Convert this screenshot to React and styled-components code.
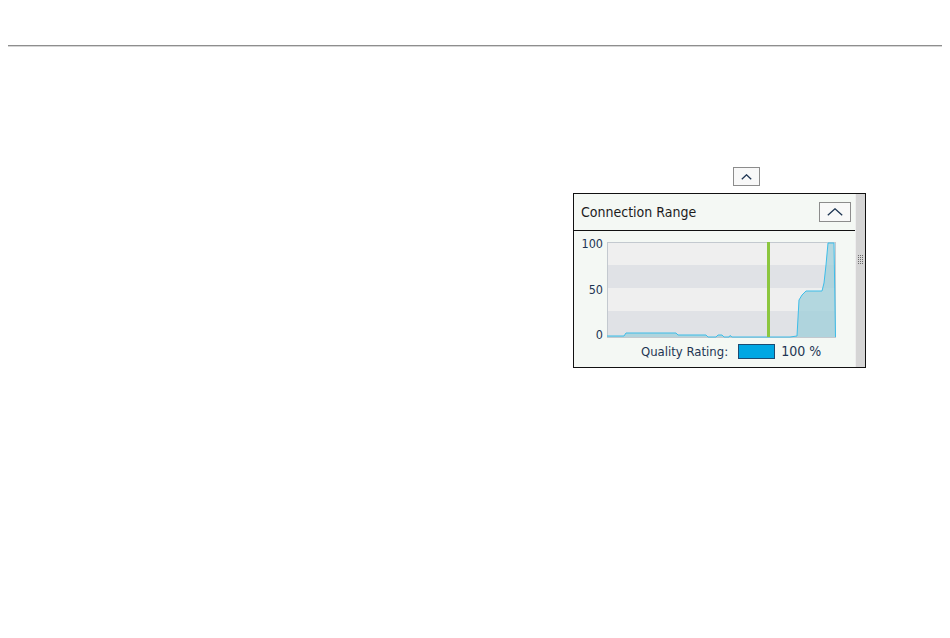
import React from "react";
import styled, { createGlobalStyle } from "styled-components";

const Global = createGlobalStyle`
  * { box-sizing: border-box; }
  html, body { background: #ffffff; }
  body {
    margin: 8px;
    font-family: "DejaVu Sans Condensed", "DejaVu Sans", sans-serif;
    color: #1a1a1a;
  }
`;

const Page = styled.div`
  display: flex;
  flex-direction: column;
`;

const Rule = styled.div`
  margin-top: 37px;
  height: 2px;
  border-top: 1px solid #8e8e8e;
  border-bottom: 1px solid #d6d6d6;
`;

const Stage = styled.div`
  display: flex;
  flex-direction: column;
  align-items: flex-start;
  padding-top: 120px;
  padding-left: 565px;
  gap: 7px;
`;

const Toolbar = styled.div`
  display: flex;
  padding-left: 160px;
`;

const ChevronButton = styled.button`
  display: flex;
  align-items: center;
  justify-content: center;
  padding: 0;
  width: ${(p) => p.$w}px;
  height: ${(p) => p.$h}px;
  border: 1px solid #8c8c8c;
  background: #f8f8f8;
  cursor: pointer;
`;

const Panel = styled.div`
  display: flex;
  width: 293px;
  height: 175px;
  border: 1px solid #111;
  background: #f4f8f4;
`;

const Main = styled.div`
  flex: 1;
  display: flex;
  flex-direction: column;
  min-width: 0;
`;

const Header = styled.div`
  display: flex;
  align-items: center;
  justify-content: space-between;
  height: 37px;
  padding: 0 4px 0 7px;
  border-bottom: 1px solid #111;
`;

const Title = styled.span`
  font-size: 14px;
  color: #1c1c1c;
`;

const ChartBody = styled.div`
  display: flex;
  flex-direction: column;
  padding-top: 4px;
`;

const QualityRow = styled.div`
  display: flex;
  align-items: center;
  height: 18px;
  padding-left: 67px;
  gap: 10px;
  color: #1e3553;
`;

const QualityLabel = styled.span`
  font-size: 13px;
`;

const QualityBar = styled.div`
  width: 37px;
  height: 15px;
  background: #00a7e3;
  border: 1px solid #1d4b72;
`;

const QualityValue = styled.span`
  font-size: 14px;
  margin-left: -4px;
`;

const Scrollbar = styled.div`
  position: relative;
  width: 10px;
  background: #d5d5d5;
  border-left: 1px solid #eeeeee;
`;

const Grip = styled.svg`
  position: absolute;
  left: 2px;
  top: 61px;
`;

const Chevron = ({ w, h }) => (
  <svg width={w} height={h} viewBox={`0 0 ${w} ${h}`}>
    <polyline
      points={`0.8,${h - 0.8} ${w / 2},0.8 ${w - 0.8},${h - 0.8}`}
      fill="none"
      stroke="#1e3553"
      strokeWidth="1.3"
    />
  </svg>
);

const OX = 574;
const OY = 235;
const raw = [
  [607, 336], [624, 336], [626, 333], [676, 333], [678, 335], [706, 335],
  [708, 337], [716, 337], [718, 335], [722, 335], [724, 337], [729, 337],
  [730, 335.5], [732, 337], [790, 337], [797, 336], [799, 300], [802, 295],
  [806, 291], [822, 291], [824, 283], [826, 265], [828, 243], [834, 243],
  [835.5, 337],
];
const pts = raw.map(([x, y]) => [x - OX, y - OY]);
const linePts = pts.map((p) => p.join(",")).join(" ");
const areaPts = `${33},${102} ` + linePts + ` ${262},${102}`;

const Chart = () => (
  <svg width="281" height="107" viewBox="0 0 281 107">
    <g fontFamily='"DejaVu Sans Condensed", "DejaVu Sans", sans-serif' fontSize="12.5" fill="#1e3553" textAnchor="end">
      <text x="29" y="13">100</text>
      <text x="29" y="59">50</text>
      <text x="29" y="104">0</text>
    </g>
    <rect x="33" y="7" width="229" height="23" fill="#efefef" />
    <rect x="33" y="30" width="229" height="23" fill="#e0e2e6" />
    <rect x="33" y="53" width="229" height="23" fill="#efefef" />
    <rect x="33" y="76" width="229" height="26" fill="#e0e2e6" />
    <rect x="33.5" y="7.5" width="228" height="95" fill="none" stroke="#c3c9cf" />
    <polygon points={areaPts} fill="#9fcfd9" fillOpacity="0.75" />
    <polyline points={linePts} fill="none" stroke="#3dbde9" strokeWidth="1" />
    <rect x="193" y="7" width="3" height="95" fill="#8cc63f" />
  </svg>
);

const gripDots = [];
for (let r = 0; r < 5; r++) {
  for (let c = 0; c < 3; c++) {
    gripDots.push(<rect key={`${r}-${c}`} x={c * 2} y={r * 2} width="1" height="1" fill="#6a6a6a" />);
  }
}

export default function App() {
  return (
    <>
      <Global />
      <Page>
        <Rule />
        <Stage>
          <Toolbar>
            <ChevronButton $w={27} $h={19} aria-label="collapse">
              <Chevron w={11} h={6} />
            </ChevronButton>
          </Toolbar>
          <Panel>
            <Main>
              <Header>
                <Title>Connection Range</Title>
                <ChevronButton $w={32} $h={20} aria-label="collapse section">
                  <Chevron w={16} h={8} />
                </ChevronButton>
              </Header>
              <ChartBody>
                <Chart />
                <QualityRow>
                  <QualityLabel>Quality Rating:</QualityLabel>
                  <QualityBar />
                  <QualityValue>100 %</QualityValue>
                </QualityRow>
              </ChartBody>
            </Main>
            <Scrollbar>
              <Grip width="6" height="10" viewBox="0 0 6 10">
                {gripDots}
              </Grip>
            </Scrollbar>
          </Panel>
        </Stage>
      </Page>
    </>
  );
}
